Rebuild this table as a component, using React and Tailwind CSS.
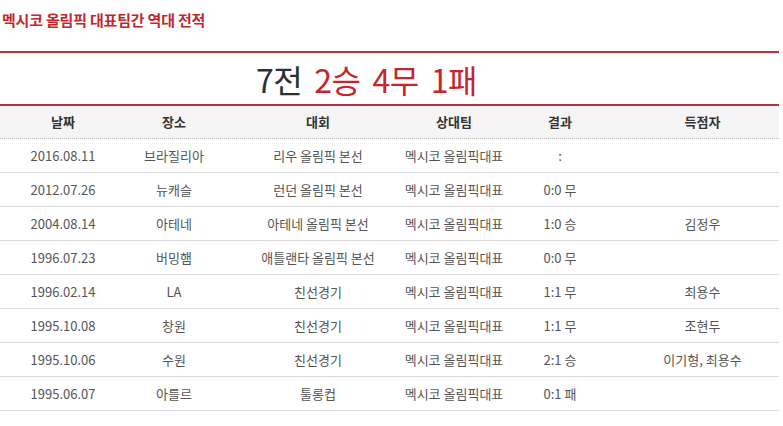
import React from 'react';

const rows = [
  ['2016.08.11', '브라질리아', '리우 올림픽 본선', '멕시코 올림픽대표', ':', ''],
  ['2012.07.26', '뉴캐슬', '런던 올림픽 본선', '멕시코 올림픽대표', '0:0 무', ''],
  ['2004.08.14', '아테네', '아테네 올림픽 본선', '멕시코 올림픽대표', '1:0 승', '김정우'],
  ['1996.07.23', '버밍햄', '애틀랜타 올림픽 본선', '멕시코 올림픽대표', '0:0 무', ''],
  ['1996.02.14', 'LA', '친선경기', '멕시코 올림픽대표', '1:1 무', '최용수'],
  ['1995.10.08', '창원', '친선경기', '멕시코 올림픽대표', '1:1 무', '조현두'],
  ['1995.10.06', '수원', '친선경기', '멕시코 올림픽대표', '2:1 승', '이기형, 최용수'],
  ['1995.06.07', '아를르', '툴롱컵', '멕시코 올림픽대표', '0:1 패', ''],
];

const headers = ['날짜', '장소', '대회', '상대팀', '결과', '득점자'];

// column widths picked so the text centres line up with the original table
const cols = 'grid grid-cols-[126px_96px_192px_80px_132px_153px]';

const Cell = ({ children }) => (
  <div className="flex justify-center items-center whitespace-nowrap">{children}</div>
);

export default function App() {
  return (
    <div
      className="w-[779px] bg-white text-[#555]"
      style={{ fontFamily: '"Noto Sans CJK KR", "Noto Sans", sans-serif' }}
    >
      {/* Title */}
      <h1 className="h-[39px] pl-[2px] pt-[8px] text-[15px] leading-[24px] font-bold text-[#c1272d] tracking-[-0.2px]">
        멕시코 올림픽 대표팀간 역대 전적
      </h1>

      <div className="mt-[12px] border-t-2 border-[#b5333a]" />

      {/* Summary */}
      <div className="h-[51px] flex justify-center items-center pr-[46px] pt-[1px] text-[32px] leading-none tracking-[-0.5px]">
        <span className="text-[#2b3037]">7전</span>
        <span className="ml-[12px] text-[#c4262e]">2승</span>
        <span className="ml-[12px] text-[#c4262e]">4무</span>
        <span className="ml-[12px] text-[#c4262e]">1패</span>
      </div>

      <div className="border-t-2 border-[#b5333a]" />

      {/* Table */}
      <div className={`${cols} h-[33px] bg-[#f5f5f5] border-b border-dotted border-[#b8b8b8] text-[13px] font-bold text-[#333]`}>
        {headers.map((h) => (
          <Cell key={h}>{h}</Cell>
        ))}
      </div>
      {rows.map((r) => (
        <div key={r[0]} className={`${cols} h-[34px] border-b border-[#dcdcdc] text-[13px]`}>
          {r.map((v, i) => (
            <Cell key={i}>{v}</Cell>
          ))}
        </div>
      ))}
    </div>
  );
}
